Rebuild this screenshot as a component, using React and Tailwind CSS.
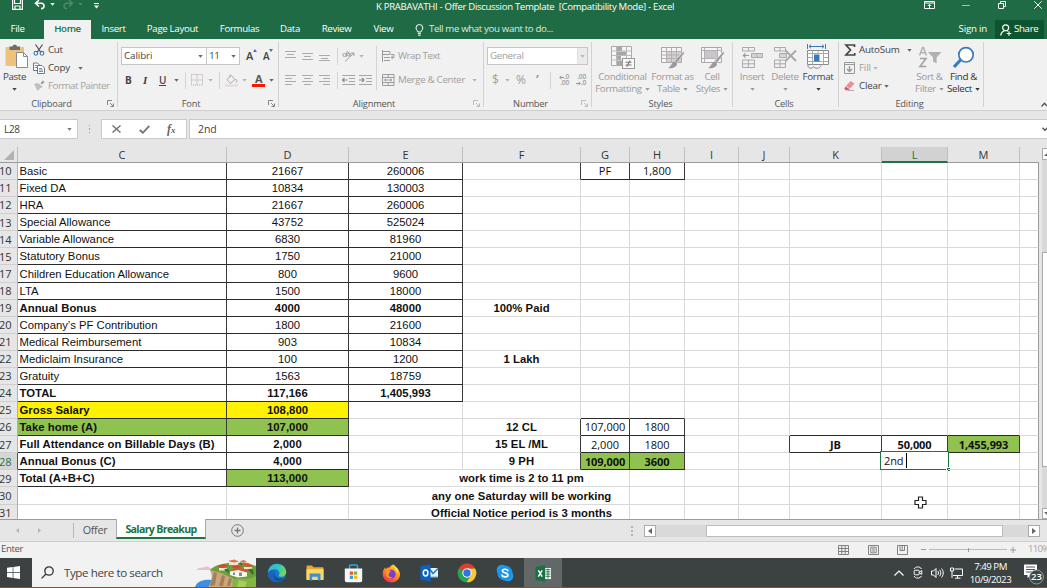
import React from "react";

/* ---------- small shared pieces ---------- */

function Caret({ className = "text-[#666]" }) {
  return (
    <svg width="5" height="3" viewBox="0 0 5 3" className={`shrink-0 ${className}`}>
      <path d="M0.3 0H4.7L2.5 2.7Z" fill="currentColor" />
    </svg>
  );
}

function Sep({ className = "h-[17px]" }) {
  return <div className={`w-px shrink-0 bg-[#d4d4d4] ${className}`} />;
}

function Launcher({ className = "text-[#777]" }) {
  return (
    <svg width="7" height="7" viewBox="0 0 7 7" className={`shrink-0 ${className}`} fill="none" stroke="currentColor">
      <path d="M0.5 5V0.5H5M3 3L6 6M6.5 3.5V6.5H3.5" strokeWidth="0.9" />
    </svg>
  );
}

function Group({ width, label, launcher, labelClass = "", children }) {
  return (
    <div className={`flex h-[71px] shrink-0 ${width}`}>
      <div className="flex min-w-0 flex-1 flex-col">
        <div className="flex h-[58px]">{children}</div>
        <div className="flex h-[13px] items-center pr-[3px]">
          <span className={`flex-1 text-center text-[9.3px] leading-[13px] tracking-[-0.2px] text-[#555] ${labelClass}`}>
            {label}
          </span>
          {launcher && <Launcher className={launcher} />}
        </div>
      </div>
      <div className="mt-[3px] h-[65px] w-px bg-[#d2d2d2]" />
    </div>
  );
}

function Big({ width, icon, lines, color = "text-[#9a9a9a]", caretOnly, caretLast }) {
  return (
    <div className={`flex shrink-0 flex-col items-center pt-[4px] ${width} ${color}`}>
      <div className="flex h-[28px] items-center">{icon}</div>
      <div className="flex h-[12px] items-center leading-[12px] whitespace-nowrap">{lines[0]}</div>
      <div className="flex h-[12px] items-center gap-[3px] leading-[12px] whitespace-nowrap">
        {lines[1]}
        {(caretOnly || caretLast) && <Caret className="text-current" />}
      </div>
    </div>
  );
}

/* ---------- title bar & tabs ---------- */

function TitleBar() {
  return (
    <div className="flex h-[20px] items-start overflow-hidden text-white">
      <div className="flex h-[13px] w-[120px] shrink-0 items-start pl-[12px]">
        <svg width="11" height="10" viewBox="0 0 11 10" fill="none" stroke="#fff" strokeWidth="1.2">
          <path d="M0.6 0V9.4H10.4V0M2.5 0V3.5H8.5V0M3 9V6H8V9" />
        </svg>
        <svg width="12" height="10" viewBox="0 0 12 10" fill="none" stroke="#fff" strokeWidth="1.6" className="ml-[11px]">
          <path d="M5 0L1.5 3.3L5 6.5M2 3.3H7.2C11 3.3 11 8.6 7 8.6" />
        </svg>
        <Caret className="mt-[3px] ml-[4px] text-white" />
        <svg width="12" height="10" viewBox="0 0 12 10" fill="none" stroke="#4e8a69" strokeWidth="1.4" className="ml-[7px]">
          <path d="M7 0L10.5 3.3L7 6.5M10 3.3H4.8C1 3.3 1 8.6 5 8.6" />
        </svg>
        <Caret className="mt-[3px] ml-[4px] text-[#4e8a69]" />
        <svg width="5" height="6" viewBox="0 0 5 6" className="mt-[3px] ml-[11px]" fill="#fff">
          <path d="M0 0H5V1.1H0ZM0 2.6H5L2.5 5.4Z" />
        </svg>
      </div>
      <div className="flex-1 pl-[256px] text-[9.6px] leading-[13px] tracking-[-0.32px] whitespace-pre">
        K PRABAVATHI - Offer Discussion Template  [Compatibility Mode] - Excel
      </div>
      <div className="flex shrink-0 items-start pt-[1px] pr-[5px]">
        <svg width="11" height="9" viewBox="0 0 11 9" fill="none" stroke="#fff" strokeWidth="1">
          <path d="M0.5 0.5H10.5V7.5H0.5ZM0.5 2H10.5M5.5 7V3.5M3.8 5L5.5 3.3L7.2 5" />
        </svg>
        <div className="mt-[4px] ml-[27px] h-px w-[8px] bg-[#9fc3ae]" />
        <svg width="8" height="8" viewBox="0 0 8 8" fill="none" stroke="#fff" strokeWidth="1" className="ml-[28px]">
          <path d="M0.5 2.5H5.5V7.5H0.5ZM2.5 2V0.5H7.5V5.5H6" />
        </svg>
        <svg width="8" height="8" viewBox="0 0 8 8" stroke="#fff" strokeWidth="1" className="ml-[28px]">
          <path d="M0.3 0.3L7.7 7.7M7.7 0.3L0.3 7.7" />
        </svg>
      </div>
    </div>
  );
}

const MENU = [
  ["File", "w-[44px] pr-[9px]"],
  ["Home", "w-[47px] bg-[#f1f1f1] text-[#217346] font-semibold"],
  ["Insert", "w-[45px]"],
  ["Page Layout", "w-[73px]"],
  ["Formulas", "w-[61px]"],
  ["Data", "w-[40px]"],
  ["Review", "w-[53px]"],
  ["View", "w-[41px]"],
];

function MenuTabs() {
  return (
    <div className="flex h-[19px] items-stretch text-[9.7px] tracking-[-0.33px] text-white">
      {MENU.map(([t, c]) => (
        <div key={t} className={`flex shrink-0 items-center justify-center whitespace-nowrap ${c}`}>
          {t}
        </div>
      ))}
      <div className="flex flex-1 items-center pl-[11px] text-[#dcebe2]">
        <svg width="9" height="12" viewBox="0 0 9 12" fill="none" stroke="#fff" strokeWidth="1">
          <path d="M2.8 8C2.8 6.5 1 6 1 3.9A3.4 3.4 0 0 1 7.8 3.9C7.8 6 6 6.5 6 8ZM2.8 9.7H6M3.2 11.3H5.6" />
        </svg>
        <span className="ml-[5px] tracking-[-0.37px] whitespace-nowrap">Tell me what you want to do...</span>
      </div>
      <div className="flex items-center pr-[8px] tracking-[-0.2px] whitespace-nowrap">Sign in</div>
      <div className="mr-[3px] flex w-[49px] items-center bg-[#0e5430] pl-[5px]">
        <svg width="12" height="12" viewBox="0 0 12 12" fill="none" stroke="#fff" strokeWidth="1.2" className="shrink-0">
          <circle cx="5.7" cy="3.8" r="3" />
          <path d="M0.7 11.5C1 8.8 2.6 7.4 4.4 6.8M7 6.6L8 7.2M9 7.2V11.8M6.7 9.5H11.3" />
        </svg>
        <span className="ml-[2px]">Share</span>
      </div>
    </div>
  );
}

/* ---------- ribbon ---------- */

function Lines({ rows }) {
  return (
    <svg width="11" height="10" viewBox="0 0 11 10" className="shrink-0" stroke="#ababab" strokeWidth="1">
      {rows.map(([x1, x2, y]) => (
        <path key={y} d={`M${x1} ${y}H${x2}`} />
      ))}
    </svg>
  );
}

function Indent({ flip }) {
  return (
    <svg width="13" height="11" viewBox="0 0 13 11" className="shrink-0" stroke="#a5a5a5" fill="none">
      <path d="M0 0.5H13M7 3.5H13M7 6.5H13M0 9.5H13" />
      <path d={flip ? "M0 5H5M3 3L5 5L3 7" : "M5.5 5H0.5M2.5 3L0.5 5L2.5 7"} stroke="#888" strokeWidth="1.2" />
    </svg>
  );
}

const TableIcon = ({ brush }) => (
  <svg width="25" height="25" viewBox="0 0 25 25" fill="none">
    <path d="M1.5 2.5H21.5V17.5H1.5Z" fill="#f6f6f6" stroke="#a8a8a8" />
    {brush === "table" ? (
      <>
        <path d="M6 7H21V17H6Z" fill="#d3cfd3" />
        <path d="M1.5 6.5H21.5M1.5 10H21.5M1.5 13.5H21.5M6.5 2.5V17.5M11.5 2.5V17.5M16.5 2.5V17.5" stroke="#b4b0b4" />
      </>
    ) : (
      <>
        <path d="M5 6H17V13H5Z" fill="#c9c5c9" />
        <path d="M1.5 5.5H21.5M1.5 13.5H21.5M4.5 2.5V17.5M17.5 2.5V17.5" stroke="#b4b0b4" />
      </>
    )}
    <path d="M23.5 6.5L24.5 8L17 18L14.5 16Z" fill="#9c999c" stroke="#f1f1f1" strokeWidth="0.6" />
    <path d="M14.5 16.5C16.5 16.8 17.2 18 17 19.5C15.8 22.8 11.5 23.8 8 23C11 22 11.5 17.5 14.5 16.5Z" fill="#9c999c" />
  </svg>
);

const CondIcon = () => (
  <svg width="25" height="25" viewBox="0 0 25 25" fill="none">
    <path d="M1.5 1.5H21.5V20.5H1.5Z" fill="#f6f6f6" stroke="#aaa" />
    <path d="M7 2H12V6H7ZM7 6.5H16V10H7ZM7 11H11V15H7ZM7 15.5H13V20H7Z" fill="#a9a5a9" />
    <path d="M1.5 6H21.5M1.5 10.5H21.5M1.5 15H21.5M6.5 1.5V20.5M16.5 1.5V20.5" stroke="#bbb" />
    <rect x="12.5" y="13.5" width="12" height="10" fill="#f8f8f8" stroke="#999" />
    <path d="M15.5 17.3H21.5M15.5 20H21.5M20.2 15.5L16.8 21.8" stroke="#777" strokeWidth="1.1" />
  </svg>
);

const InsertIcon = () => (
  <svg width="22" height="23" viewBox="0 0 22 23" fill="none" stroke="#aca8ac">
    <path d="M1.5 1.5H13.5V5H1.5ZM7.5 1.5V5M1.5 14H13.5V21.5H1.5ZM7.5 14V21.5M1.5 17.8H13.5" />
    <path d="M10.5 7.5H21.5V11.5H10.5Z" fill="#d6d2d6" />
    <path d="M16 7.5V11.5" />
    <path d="M8 9.5H2.5M4.5 7.3L2.3 9.5L4.5 11.7" stroke="#999" strokeWidth="1.2" />
  </svg>
);

const DeleteIcon = () => (
  <svg width="24" height="23" viewBox="0 0 24 23" fill="none" stroke="#aca8ac">
    <path d="M1.5 1.5H12.5V5H1.5ZM7 1.5V5M1.5 14H12.5V21.5H1.5ZM7 14V21.5M1.5 17.8H12.5" />
    <path d="M6.5 7.5H13.5V11.5H6.5Z" fill="#d6d2d6" />
    <path d="M12.5 4.5L23 15M23 4.5L12.5 15" stroke="#a9a5a9" strokeWidth="1.8" />
  </svg>
);

const FormatIcon = () => (
  <svg width="24" height="26" viewBox="0 0 24 26" fill="none">
    <path d="M1.5 0V5M19.5 0V5M3 2.5H18M5 0.7L3 2.5L5 4.3M16 0.7L18 2.5L16 4.3" stroke="#3b79bd" />
    <path d="M1.5 6.5H22.5V20.5H1.5Z" fill="#fff" stroke="#8a8a8a" />
    <path d="M1.5 9.5H22.5M1.5 17.5H22.5M6.5 6.5V20.5M17.5 6.5V20.5M1.5 13.5H6.5M17.5 13.5H22.5M12 6.5V9.5" stroke="#aaa" />
    <rect x="8" y="10.5" width="5.5" height="7" fill="#3b79bd" />
    <path d="M2 21C1.5 25 6.5 25 7.5 22.5C8.5 25 14 25 15 21.5" stroke="#8a8a8a" />
  </svg>
);

const SortIcon = () => (
  <svg width="24" height="24" viewBox="0 0 24 24" fill="none">
    <path d="M1.5 10.5L4.6 2.5H5.4L8.5 10.5M2.6 7.8H7.4" stroke="#b5b1b5" strokeWidth="1.5" />
    <path d="M2 13.5H8L2 21.5H8.3" stroke="#a5a1a5" strokeWidth="1.6" />
    <path d="M10 7H23.5L18.6 12.5V18.5L15 16.5V12.5Z" fill="#b3afb3" />
  </svg>
);

const FindIcon = () => (
  <svg width="23" height="23" viewBox="0 0 23 23" fill="none">
    <path d="M9 13.5L2 21" stroke="#3b79bd" strokeWidth="3.2" />
    <circle cx="14" cy="8.8" r="7.2" fill="#fff" stroke="#3b79bd" strokeWidth="1.7" />
  </svg>
);

function Ribbon() {
  return (
    <div className="flex h-[72px] shrink-0 border-b border-[#cfcfcf] bg-[#f1f1f1] text-[9.8px] tracking-[-0.36px] text-[#444]">
      <Group width="w-[118px]" label="Clipboard" launcher="text-[#777]" labelClass="pl-[-5px] pr-[4px]">
        <Big
          width="w-[29px]"
          color="text-[#444]"
          caretOnly
          lines={["Paste", ""]}
          icon={
            <svg width="23" height="25" viewBox="0 0 23 25" className="mt-[-2px] ml-[3px]">
              <rect x="0.5" y="3" width="18.5" height="19" rx="1" fill="#efc27c" />
              <path d="M4.5 6V2.5H7.5C7.5 0 12 0 12 2.5H15V6Z" fill="#6d6d6d" />
              <path d="M11.5 8.5H18.5L22.5 12.5V23.5H11.5Z" fill="#fff" stroke="#8a8a8a" />
              <path d="M18.5 8.5V12.5H22.5" fill="none" stroke="#8a8a8a" />
            </svg>
          }
        />
        <div className="flex flex-col pt-[2px] pl-[4px] tracking-[-0.3px]">
          <div className="flex h-[18px] items-center gap-[3px]">
            <svg width="12" height="12" viewBox="0 0 12 12" fill="none" className="shrink-0">
              <path d="M2.5 0.5L8 8.5M9.5 0.5L4 8.5" stroke="#555" strokeWidth="1.3" />
              <circle cx="2.9" cy="9.3" r="1.9" stroke="#3b79bd" strokeWidth="1.1" />
              <circle cx="9" cy="9.3" r="1.9" stroke="#3b79bd" strokeWidth="1.1" />
            </svg>
            Cut
          </div>
          <div className="flex h-[18px] items-center gap-[3px]">
            <svg width="12" height="12" viewBox="0 0 12 12" fill="#fff" stroke="#777" className="shrink-0">
              <path d="M0.5 1H4.5L6.5 3V8.5H0.5Z" />
              <path d="M4.5 3.5H9L11.5 6V11.5H4.5Z" />
              <path d="M6 6.5H9M6 8H10M6 9.5H10M1.8 3.5H4M1.8 5.5H4" stroke="#3b79bd" strokeWidth="0.8" />
            </svg>
            Copy
            <Caret className="ml-[5px] text-[#666]" />
          </div>
          <div className="flex h-[18px] items-center gap-[3px] text-[#a3a3a3]">
            <svg width="12" height="12" viewBox="0 0 12 12" className="shrink-0">
              <path d="M7.5 3L10 0.5L11.5 2L9 4.5Z" fill="#999" />
              <path d="M4 2.5L9.5 7L6 8.5Z" fill="#b0a8b0" />
              <path d="M1 4L4 3L8 7.5L4.5 11Z" fill="#c5bfc5" />
            </svg>
            <span className="tracking-[-0.48px] whitespace-nowrap">Format Painter</span>
          </div>
        </div>
      </Group>

      <Group width="w-[161px]" label="Font" launcher="text-[#777]" labelClass="pr-[4px]">
        <div className="flex flex-col gap-[6px] pt-[8px] pl-[3px]">
          <div className="flex h-[18px] items-center">
            <div className="flex h-[18px] w-[86px] items-center justify-between border border-[#c6c6c6] bg-white pr-[3px] pl-[2px]">
              <span className="tracking-[-0.1px]">Calibri</span>
              <Caret />
            </div>
            <div className="flex h-[18px] w-[33px] items-center justify-between border border-l-0 border-[#c6c6c6] bg-white pr-[3px] pl-[2px]">
              11
              <Caret />
            </div>
            <div className="flex w-[17px] items-start pl-[6px] text-[11px] leading-[12px] font-semibold">
              A
              <svg width="4" height="3" viewBox="0 0 4 3" className="mt-[-1px] shrink-0"><path d="M0 3H4L2 0Z" fill="#3b79bd" /></svg>
            </div>
            <div className="flex items-start pl-[6px] text-[10px] leading-[12px] font-semibold">
              A
              <svg width="4" height="3" viewBox="0 0 4 3" className="mt-[-1px] shrink-0"><path d="M0 0H4L2 3Z" fill="#3b79bd" /></svg>
            </div>
          </div>
          <div className="flex h-[18px] items-center">
            <span className="w-[17px] pl-[4px] text-[10px] font-bold">B</span>
            <span className="w-[17px] pl-[5px] font-['Liberation_Serif',serif] text-[11px] font-bold italic">I</span>
            <span className="w-[17px] pl-[4px] text-[10px] font-semibold underline">U</span>
            <Caret className="ml-[2px] text-[#666]" />
            <Sep className="ml-[6px] h-[17px]" />
            <svg width="12" height="12" viewBox="0 0 12 12" fill="none" stroke="#b9a9ad" className="ml-[5px]" strokeDasharray="1 1">
              <path d="M0.5 0.5H11.5V11H0.5ZM6 0.5V11M0.5 6H11.5" />
            </svg>
            <Caret className="ml-[5px] text-[#b5b5b5]" />
            <Sep className="ml-[6px] h-[17px]" />
            <svg width="14" height="13" viewBox="0 0 14 13" className="ml-[5px]" fill="none" stroke="#aaa">
              <path d="M2 5.5L6.5 1.5L10 5.5L5.5 9.5ZM5 3V0.5M10.5 5C12.5 6.5 12 8 11.5 8.5" />
              <path d="M0 11.5H13" stroke="#e5dde0" strokeWidth="2.5" />
            </svg>
            <Caret className="ml-[3px] text-[#b5b5b5]" />
            <div className="ml-[5px] flex w-[13px] flex-col items-center">
              <span className="text-[11px] leading-[9px] font-bold text-[#555]">A</span>
              <div className="mt-[1px] h-[3px] w-[13px] bg-[#ff1500]" />
            </div>
            <Caret className="ml-[4px] text-[#666]" />
          </div>
        </div>
      </Group>

      <Group width="w-[205px]" label="Alignment" launcher="text-[#b5b5b5]" labelClass="pr-[4px]">
        <div className="flex flex-col gap-[6px] pt-[8px] pl-[6px]">
          <div className="flex h-[18px] items-center">
            <div className="flex gap-[6px]">
              <Lines rows={[[0, 11, 0.5], [2, 9, 3.5], [0, 11, 6.5]]} />
              <Lines rows={[[0, 11, 2.5], [2, 9, 5.5], [0, 11, 8.5]]} />
              <Lines rows={[[0, 11, 4.5], [2, 9, 7.5], [0, 11, 9.5]]} />
            </div>
            <Sep className="ml-[7px] h-[17px]" />
            <svg width="13" height="12" viewBox="0 0 13 12" className="ml-[4px]" fill="none" stroke="#a0a0a0">
              <path d="M3 11.5L12 3M12 3H9M12 3V6" />
              <circle cx="2.5" cy="5" r="1.6" />
              <path d="M4.5 2.5V6.8M5 1L8 5" />
              <circle cx="7" cy="4.5" r="1.6" />
            </svg>
            <Caret className="ml-[4px] text-[#b5b5b5]" />
          </div>
          <div className="flex h-[18px] items-center">
            <div className="flex gap-[6px]">
              <Lines rows={[[0, 11, 0.5], [0, 7, 3.5], [0, 11, 6.5], [0, 7, 9.5]]} />
              <Lines rows={[[0, 11, 0.5], [2, 9, 3.5], [0, 11, 6.5], [2, 9, 9.5]]} />
              <Lines rows={[[0, 11, 0.5], [4, 11, 3.5], [0, 11, 6.5], [4, 11, 9.5]]} />
            </div>
            <Sep className="ml-[7px] h-[17px]" />
            <div className="ml-[4px] flex gap-[4px]">
              <Indent />
              <Indent flip />
            </div>
          </div>
        </div>
        <Sep className="mt-[7px] ml-[4px] h-[44px]" />
        <div className="flex flex-col gap-[6px] pt-[8px] pl-[5px] tracking-[-0.3px] text-[#a0a0a0]">
          <div className="flex h-[18px] items-center gap-[3px]">
            <svg width="13" height="12" viewBox="0 0 13 12" fill="none" stroke="#9c9c9c">
              <path d="M0.5 0V12M0.5 1.5H8V4.5H0.5M2 7.5H8M2 10.5H8M9 4.5H12V7.5H9.5M10.8 6L9 7.5L10.8 9" />
            </svg>
            <span className="tracking-[-0.5px] whitespace-nowrap">Wrap Text</span>
          </div>
          <div className="flex h-[18px] items-center gap-[3px]">
            <svg width="13" height="12" viewBox="0 0 13 12" fill="none" stroke="#9c9c9c">
              <path d="M0.5 0.5H12V11.5H0.5ZM0.5 3.5H12M0.5 8.5H12M6.2 0.5V3.5M6.2 8.5V11.5M2.5 6H10M4 4.8L2.5 6L4 7.2M8.5 4.8L10 6L8.5 7.2" />
            </svg>
            <span className="tracking-[-0.35px] whitespace-nowrap">Merge & Center</span>
            <Caret className="ml-[4px] text-[#b5b5b5]" />
          </div>
        </div>
      </Group>

      <Group width="w-[108px]" label="Number" launcher="text-[#b5b5b5]" labelClass="pr-[4px]">
        <div className="flex flex-col gap-[6px] pt-[8px] pl-[3px] text-[#a0a0a0]">
          <div className="flex h-[18px] w-[101px] items-stretch justify-between border border-[#c6c6c6] bg-white pl-[2px]">
            <span className="leading-[16px]">General</span>
            <div className="flex w-[10px] items-center justify-center border-l border-[#e0e0e0] bg-[#ebebeb]">
              <Caret className="text-[#b5b5b5]" />
            </div>
          </div>
          <div className="flex h-[18px] items-center">
            <span className="w-[18px] pl-[5px] text-[12px]">$</span>
            <Caret className="text-[#b5b5b5]" />
            <span className="w-[19px] pl-[6px] text-[12px]">%</span>
            <span className="w-[16px] pl-[7px] text-[13px] font-bold">’</span>
            <Sep className="ml-[5px] h-[17px]" />
            <div className="ml-[6px] flex w-[12px] shrink-0 flex-col items-end text-[6.6px] leading-[6px] font-semibold tracking-[-0.2px]">
              <div className="flex items-center">
                <svg width="5" height="5" viewBox="0 0 5 5" fill="none" stroke="#999"><path d="M5 2.5H0.8M2.5 0.8L0.8 2.5L2.5 4.2" /></svg>
                .0
              </div>
              <span>.00</span>
            </div>
            <div className="ml-[5px] flex w-[12px] shrink-0 flex-col items-end text-[6.6px] leading-[6px] font-semibold tracking-[-0.2px]">
              <span>.00</span>
              <div className="flex items-center">
                <svg width="5" height="5" viewBox="0 0 5 5" fill="none" stroke="#999"><path d="M0 2.5H4.2M2.5 0.8L4.2 2.5L2.5 4.2" /></svg>
                .0
              </div>
            </div>
          </div>
        </div>
      </Group>

      <Group width="w-[141px]" label="Styles">
        <Big width="w-[61px]" icon={<CondIcon />} lines={["Conditional", "Formatting"]} caretLast />
        <Big width="w-[39px]" icon={<TableIcon brush="table" />} lines={["Format as", "Table"]} caretLast />
        <Big width="w-[40px]" icon={<TableIcon brush="cell" />} lines={["Cell", "Styles"]} caretLast />
      </Group>

      <Group width="w-[106px]" label="Cells">
        <Big width="ml-[2px] w-[34px]" icon={<InsertIcon />} lines={["Insert", ""]} caretOnly />
        <Big width="w-[32px]" icon={<DeleteIcon />} lines={["Delete", ""]} caretOnly />
        <Big width="w-[34px]" icon={<FormatIcon />} lines={["Format", ""]} caretOnly color="text-[#444]" />
      </Group>

      <Group width="w-[145px]" label="Editing">
        <div className="flex w-[72px] shrink-0 flex-col pt-[2px] pl-[5px] tracking-[-0.2px]">
          <div className="flex h-[18px] items-center">
            <svg width="12" height="12" viewBox="0 0 12 12" fill="none" stroke="#444" strokeWidth="1.7" className="shrink-0">
              <path d="M10.5 3V1H2L6.5 6L2 11H10.7V9" />
            </svg>
            <span className="ml-[3px]">AutoSum</span>
            <Caret className="ml-[7px] text-[#666]" />
          </div>
          <div className="flex h-[18px] items-center text-[#a0a0a0]">
            <svg width="11" height="12" viewBox="0 0 11 12" fill="none" stroke="#999">
              <path d="M0.5 0.5H10.5V11.5H0.5ZM0.5 2.5H10.5" />
              <path d="M5.5 4V9.5M3 7L5.5 9.5L8 7" strokeWidth="1.4" />
            </svg>
            <span className="ml-[4px]">Fill</span>
            <Caret className="ml-[2px] text-[#b5b5b5]" />
          </div>
          <div className="flex h-[18px] items-center">
            <svg width="11" height="10" viewBox="0 0 11 10">
              <path d="M6.5 0L10.5 2.5L6 7.5L2 5Z" fill="#f08b96" />
              <path d="M1.6 5.5L5.6 8L4.5 9.3H1.5L0.3 7.5Z" fill="#e2566a" />
              <path d="M4 9.5H10" stroke="#999" strokeWidth="0.8" />
            </svg>
            <span className="ml-[4px]">Clear</span>
            <Caret className="ml-[2px] text-[#666]" />
          </div>
        </div>
        <Big width="w-[37px]" icon={<SortIcon />} lines={["Sort &", "Filter"]} caretLast />
        <Big width="w-[31px]" icon={<FindIcon />} lines={["Find &", "Select"]} caretLast color="text-[#333]" />
      </Group>

      <div className="flex flex-1 items-end justify-end pb-[3px]">
        <svg width="6" height="5" viewBox="0 0 6 5" fill="none" stroke="#555" strokeWidth="1.3">
          <path d="M0.5 4.5L3.5 1.2L6 4" />
        </svg>
      </div>
    </div>
  );
}

/* ---------- formula bar ---------- */

function FormulaBar() {
  return (
    <div className="flex h-[36px] shrink-0 items-start bg-[#e6e6e6] pt-[8px] text-[10px] text-[#444]">
      <div className="flex h-[20px] w-[78px] items-center justify-between border border-l-0 border-[#cacaca] bg-white pr-[5px] pl-[4px]">
        <span className="tracking-[-0.3px]">L28</span>
        <Caret className="text-[#777]" />
      </div>
      <div className="flex h-[20px] w-[23px] flex-col items-center justify-center gap-[2px]">
        <div className="h-[1.5px] w-[1.5px] bg-[#a5a5a5]" />
        <div className="h-[1.5px] w-[1.5px] bg-[#a5a5a5]" />
        <div className="h-[1.5px] w-[1.5px] bg-[#a5a5a5]" />
      </div>
      <div className="flex h-[20px] w-[86px] items-center border border-[#cacaca] bg-white pl-[10px]">
        <svg width="9" height="8" viewBox="0 0 9 8" stroke="#777" strokeWidth="1.5">
          <path d="M0.5 0.5L8.5 7.5M8.5 0.5L0.5 7.5" />
        </svg>
        <svg width="11" height="9" viewBox="0 0 11 9" fill="none" stroke="#777" strokeWidth="1.9" className="ml-[18px]">
          <path d="M0.8 5L3.8 7.8L10.3 0.8" />
        </svg>
        <span className="ml-[17px] font-['Liberation_Serif',serif] text-[12px] font-bold text-[#666] italic">
          f<span className="text-[9px]">x</span>
        </span>
      </div>
      <div className="ml-[2px] flex h-[20px] flex-1 items-center justify-between border border-r-0 border-[#cacaca] bg-white pl-[8px]">
        <span className="pt-[1px] text-[10.5px] tracking-[-0.1px]">2nd</span>
        <svg width="5" height="5" viewBox="0 0 5 5" fill="none" stroke="#555" strokeWidth="1.4">
          <path d="M0.5 0.8L3 3.3L5.5 0.8" />
        </svg>
      </div>
    </div>
  );
}

/* ---------- sheet ---------- */

const COLS = [
  ["C", "w-[209px]"],
  ["D", "w-[122px]"],
  ["E", "w-[114px]"],
  ["F", "w-[118px]"],
  ["G", "w-[49px]"],
  ["H", "w-[55px]"],
  ["I", "w-[54px]"],
  ["J", "w-[51px]"],
  ["K", "w-[92px]"],
  ["L", "w-[66px]"],
  ["M", "w-[72px]"],
  ["N", "w-[19px]"],
];

const GREEN = "bg-[#8fc24f]";
const YELLOW = "bg-[#fff200]";

const ROWS = [
  { n: 10, C: "Basic", D: "21667", E: "260006", G: "PF", H: "1,800" },
  { n: 11, C: "Fixed DA", D: "10834", E: "130003" },
  { n: 12, C: "HRA", D: "21667", E: "260006" },
  { n: 13, C: "Special Allowance", D: "43752", E: "525024" },
  { n: 14, C: "Variable Allowance", D: "6830", E: "81960" },
  { n: 15, C: "Statutory Bonus", D: "1750", E: "21000" },
  { n: 17, C: "Children Education Allowance", D: "800", E: "9600" },
  { n: 18, C: "LTA", D: "1500", E: "18000" },
  { n: 19, C: "Annual Bonus", D: "4000", E: "48000", F: "100% Paid", bold: true },
  { n: 20, C: "Company’s PF Contribution", D: "1800", E: "21600" },
  { n: 21, C: "Medical Reimbursement", D: "903", E: "10834" },
  { n: 22, C: "Mediclaim Insurance", D: "100", E: "1200", F: "1 Lakh" },
  { n: 23, C: "Gratuity", D: "1563", E: "18759" },
  { n: 24, C: "TOTAL", D: "117,166", E: "1,405,993", bold: true },
  { n: 25, C: "Gross Salary", D: "108,800", bold: true, fill: { C: YELLOW, D: YELLOW } },
  { n: 26, C: "Take home (A)", D: "107,000", F: "12 CL", G: "107,000", H: "1800", bold: true, fill: { C: GREEN, D: GREEN } },
  { n: 27, C: "Full Attendance on Billable Days (B)", D: "2,000", F: "15 EL /ML", G: "2,000", H: "1800", K: "JB", L: "50,000", M: "1,455,993", bold: true, fill: { M: GREEN } },
  { n: 28, C: "Annual Bonus (C)", D: "4,000", F: "9 PH", G: "109,000", H: "3600", bold: true, ghBold: true, fill: { G: GREEN, H: GREEN } },
  { n: 29, C: "Total (A+B+C)", D: "113,000", F: "work time is 2 to 11 pm", bold: true, fill: { D: GREEN } },
  { n: 30, F: "any one Saturday will be working" },
  { n: 31, F: "Official Notice period is 3 months" },
];

const hasBottom = (c, n) =>
  (c === "C" || c === "D") ? n <= 29 :
  c === "E" ? n <= 24 :
  (c === "G" || c === "H") ? n === 10 || (n >= 25 && n <= 28) :
  (c === "K" || c === "L" || c === "M") ? n === 26 || n === 27 : false;

const hasRight = (c, n) =>
  (c === "C" || c === "D") ? n <= 29 :
  c === "E" ? n <= 24 :
  (c === "F" || c === "G" || c === "H") ? n === 10 || (n >= 26 && n <= 28) :
  (c === "J" || c === "K" || c === "L" || c === "M") ? n === 27 : false;

function Cell({ col, width, row }) {
  const { n } = row;
  const b = hasBottom(col, n) ? "border-b-[#2b2b2b]" : "border-b-[#d9d9d9]";
  const spill = n >= 29 && (col === "E" || col === "F");
  const r = hasRight(col, n)
    ? "border-r-[#3a3a3a]"
    : spill
      ? "border-r-transparent"
      : col === "N"
        ? "border-r-[#9b9b9b]"
        : "border-r-[#d9d9d9]";
  const fill = row.fill?.[col] ?? "";
  const calibri = "GHKLM".includes(col);
  const bold = col === "F" || (calibri ? "KLM".includes(col) || row.ghBold : row.bold);
  const font = calibri
    ? "font-['Open_Sans',sans-serif] text-[11px]"
    : "font-['Liberation_Sans',Arial,sans-serif] text-[11.3px]";
  return (
    <div
      className={`relative flex shrink-0 items-center border-r border-b pt-[1px] whitespace-nowrap ${width} ${b} ${r} ${fill} ${font} ${
        bold ? (calibri ? "font-bold tracking-[-0.1px]" : "font-bold tracking-[0.04px]") : ""
      } ${col === "C" ? "justify-start pl-[1.5px]" : "justify-center"} text-[#111]`}
    >
      {row[col]}
      {col === "L" && n === 28 && (
        <div className="absolute -top-[2px] -left-[2px] flex h-[19px] w-[69px] items-center border-[1.5px] border-[#217346] bg-white pl-[3px] font-normal">
          <span className="text-[11px] tracking-[-0.1px]">2nd</span>
          <div className="ml-[3px] h-[15px] w-px bg-black" />
          <div className="absolute -right-[2px] -bottom-[2px] h-[4px] w-[4px] border-t border-l border-white bg-[#217346]" />
        </div>
      )}
    </div>
  );
}

function Sheet() {
  return (
    <div className="flex h-[372px] shrink-0 overflow-hidden bg-[#e6e6e6] font-['Open_Sans',sans-serif]">
      <div className="flex w-[1039px] shrink-0 flex-col">
        <div className="flex h-[16px] shrink-0 border-b border-[#9b9b9b] text-[11px] text-[#333]">
          <div className="flex w-[18px] shrink-0 items-end justify-end border-r border-[#bcbcbc] pr-[3px] pb-[2px]">
            <svg width="10" height="10" viewBox="0 0 10 10"><path d="M10 0V10H0Z" fill="#b3b3b3" /></svg>
          </div>
          {COLS.map(([c, w]) => (
            <div
              key={c}
              className={`flex shrink-0 items-center justify-center ${w} ${
                c === "N" ? "" : "border-r border-[#c0c0c0]"
              } ${c === "L" ? "h-[16px] border-b-2 border-b-[#217346] bg-[#d2d2d3] pt-[2px] text-[#217346]" : "h-[15px] pt-[1px]"}`}
            >
              {c === "N" ? "" : c}
            </div>
          ))}
        </div>
        <div className="flex h-[356px] flex-col overflow-hidden">
          {ROWS.map((row) => (
            <div key={row.n} className="flex h-[17.08px] shrink-0 bg-white">
              <div
                className={`flex w-[18px] shrink-0 items-center border-r border-b border-b-[#cfcfcf] text-[11px] ${
                  row.n === 28
                    ? "border-r-[#217346] bg-[#d6d6d6] text-[#217346]"
                    : "border-r-[#b0b0b0] bg-[#e6e6e6] text-[#333]"
                }`}
              >
                <span className="-ml-px pt-[1px]">{row.n}</span>
              </div>
              {COLS.map(([c, w]) => (
                <Cell key={c} col={c} width={w} row={row} />
              ))}
            </div>
          ))}
        </div>
      </div>
      <div className="flex flex-1 flex-col bg-[#e6e6e6] pt-[1px] pl-[3px]">
        <div className="flex h-[12px] items-center justify-end border border-r-0 border-[#ababab] bg-white">
          <svg width="3" height="3" viewBox="0 0 3 3"><path d="M0 3L3 0V3Z" fill="#666" /></svg>
        </div>
        <div className="h-[92px] bg-[#d9d9d9]" />
        <div className="h-[215px] border border-r-0 border-[#ababab] bg-white" />
        <div className="h-[41px] bg-[#d9d9d9]" />
        <div className="flex h-[11px] items-center justify-end border border-r-0 border-[#ababab] bg-white">
          <svg width="3" height="3" viewBox="0 0 3 3"><path d="M0 0H3V3Z" fill="#666" /></svg>
        </div>
      </div>
    </div>
  );
}

/* ---------- sheet tabs and status ---------- */

function SheetTabs() {
  return (
    <div className="flex h-[23px] shrink-0 items-start border-t border-b border-t-[#9b9b9b] border-b-[#cfcfcf] bg-[#e6e6e6] text-[10.8px] text-[#555]">
      <div className="flex h-[21px] w-[73px] items-center pl-[16px]">
        <svg width="3" height="5" viewBox="0 0 3 5"><path d="M3 0V5L0 2.5Z" fill="#b5b5b5" /></svg>
        <svg width="3" height="5" viewBox="0 0 3 5" className="ml-[19px]"><path d="M0 0V5L3 2.5Z" fill="#b5b5b5" /></svg>
      </div>
      <div className="mt-[3px] h-[15px] w-px bg-[#b8b8b8]" />
      <div className="flex h-[20px] w-[42px] items-center justify-center tracking-[-0.3px]">Offer</div>
      <div className="-mt-px flex h-[20px] w-[90px] items-center justify-center border-x border-b-2 border-x-[#ababab] border-b-[#217346] bg-white pt-[3px] text-[10.6px] font-bold tracking-[-0.65px] whitespace-nowrap text-[#217346]">
        Salary Breakup
      </div>
      <svg width="13" height="13" viewBox="0 0 13 13" className="mt-[4px] ml-[25px]" fill="none" stroke="#777">
        <circle cx="6.5" cy="6.5" r="5.8" />
        <path d="M6.5 3.5V9.5M3.5 6.5H9.5" strokeWidth="1.3" />
      </svg>
      <div className="flex h-[21px] flex-1 items-center justify-end">
        <div className="mr-[11px] flex flex-col gap-[2px]">
          <div className="h-[2px] w-[2px] bg-[#b5b5b5]" />
          <div className="h-[2px] w-[2px] bg-[#b5b5b5]" />
          <div className="h-[2px] w-[2px] bg-[#b5b5b5]" />
        </div>
        <div className="flex h-[12px] w-[12px] items-center justify-center border border-[#ababab] bg-white">
          <svg width="4" height="6" viewBox="0 0 4 6"><path d="M4 0V6L0 3Z" fill="#666" /></svg>
        </div>
        <div className="flex h-[12px] w-[372px] bg-[#d9d9d9] pl-[50px]">
          <div className="h-[12px] w-[297px] border border-[#bdbdbd] bg-white" />
        </div>
        <div className="mr-[7px] flex h-[12px] w-[12px] items-center justify-center border border-[#ababab] bg-white">
          <svg width="4" height="6" viewBox="0 0 4 6"><path d="M0 0V6L4 3Z" fill="#666" /></svg>
        </div>
      </div>
    </div>
  );
}

function StatusBar() {
  return (
    <div className="flex h-[16px] shrink-0 items-center bg-[#f1f1f1] pb-[1px] text-[9.6px] text-[#555]">
      <span className="flex-1 pl-[1px] tracking-[-0.4px]">Enter</span>
      <svg width="11" height="10" viewBox="0 0 11 10" fill="none" stroke="#777">
        <path d="M0.5 0.5H10.5V9.5H0.5ZM0.5 3.5H10.5M0.5 6.5H10.5M3.8 0.5V9.5M7.2 0.5V9.5" strokeWidth="0.9" />
      </svg>
      <svg width="11" height="10" viewBox="0 0 11 10" fill="none" stroke="#777" className="ml-[19px]">
        <path d="M0.5 0.5H10.5V9.5H0.5Z M2.8 2.2H8.2V7.8H2.8ZM4 4H7M4 6H7" strokeWidth="0.9" />
      </svg>
      <svg width="11" height="10" viewBox="0 0 11 10" fill="none" stroke="#777" className="ml-[18px]">
        <path d="M0.5 0.5H10.5V9.5H0.5ZM3 0.5V5.5H7.5V0.5M5.2 0.5V5.5" strokeWidth="0.9" />
      </svg>
      <div className="ml-[13px] h-px w-[5px] bg-[#999]" />
      <div className="ml-[3px] flex w-[78px] items-center">
        <div className="h-px w-[39px] bg-[#bbb]" />
        <div className="h-[4px] w-px bg-[#999]" />
        <div className="h-px w-[38px] bg-[#bbb]" />
      </div>
      <svg width="6" height="6" viewBox="0 0 6 6" stroke="#999" className="ml-[3px]"><path d="M3 0V6M0 3H6" /></svg>
      <span className="ml-[12px] w-[19px] tracking-[-0.75px] whitespace-nowrap text-[#a5a5a5]">110%</span>
    </div>
  );
}

/* ---------- taskbar ---------- */

const EdgeLogo = () => (
  <svg width="20" height="20" viewBox="0 0 20 20">
    <defs>
      <linearGradient id="e1" x1="0" y1="0" x2="1" y2="0.4">
        <stop offset="0" stopColor="#2bb3e6" />
        <stop offset="0.6" stopColor="#35c6c0" />
        <stop offset="1" stopColor="#6bd95a" />
      </linearGradient>
    </defs>
    <circle cx="10" cy="10" r="9.2" fill="#1476cf" />
    <path d="M0.9 9.5C1.5 4 5.5 0.8 10 0.8C15.5 0.8 19.2 4.8 19.2 9C19.2 12 17 13.8 14 13.8C12 13.8 11.3 13 12 12C13.4 9.5 11.5 6.3 8 6.3C4.5 6.3 1.5 8 0.9 9.5Z" fill="url(#e1)" />
    <path d="M7.6 9C5 11.5 6.5 17 11.5 18.8C6.5 20 1.6 16.5 1 11C1.8 7 6 6.4 7.6 9Z" fill="#1b62b8" />
    <path d="M8 9.2C6.5 12 9 16.5 17 15C14 20 8.5 19 7 15C6.2 12.6 6.6 10.5 8 9.2Z" fill="#1450a0" />
  </svg>
);

const FolderLogo = () => (
  <svg width="18" height="16" viewBox="0 0 18 16">
    <path d="M0.5 1.5C0.5 1 1 0.5 1.5 0.5H6L7.5 2.2H16.5C17 2.2 17.5 2.6 17.5 3.2V14.5H0.5Z" fill="#e8a92c" />
    <path d="M0.5 4.2H17.5V15H0.5Z" fill="#fbd768" />
    <path d="M3.5 8.5H14.5V15.5H11.8V11.8H6.2V15.5H3.5Z" fill="#3c8fd8" />
  </svg>
);

const StoreLogo = () => (
  <svg width="19" height="19" viewBox="0 0 19 19">
    <path d="M5.5 5V2.5C5.5 1.5 6 1 7 1H12C13 1 13.5 1.5 13.5 2.5V5" fill="none" stroke="#2fa8e0" strokeWidth="1.6" />
    <path d="M0.8 4.5H18.2V16C18.2 17.5 17.5 18.2 16 18.2H3C1.5 18.2 0.8 17.5 0.8 16Z" fill="#f6f6f6" />
    <path d="M5.8 7.5H9V10.7H5.8Z" fill="#ef5533" />
    <path d="M10 7.5H13.2V10.7H10Z" fill="#7ab829" />
    <path d="M5.8 11.7H9V14.9H5.8Z" fill="#2b9fe6" />
    <path d="M10 11.7H13.2V14.9H10Z" fill="#f7b70c" />
  </svg>
);

const FirefoxLogo = () => (
  <svg width="19" height="19" viewBox="0 0 19 19">
    <defs>
      <linearGradient id="f1" x1="0.8" y1="0" x2="0.2" y2="1">
        <stop offset="0" stopColor="#ffd43a" />
        <stop offset="0.5" stopColor="#ff8a1e" />
        <stop offset="1" stopColor="#f0245c" />
      </linearGradient>
    </defs>
    <path d="M12 0.5C13 3 17 4.5 18 9C18.8 14 14.5 18.5 9.5 18.5C4.5 18.5 0.7 14.5 0.7 10C0.7 7 1.8 4.5 3.2 3.2C3.3 4.2 3.6 4.7 4 5C5.2 3.5 6.5 3.3 7.5 3.6C8.5 1.6 10 0.8 12 0.5Z" fill="url(#f1)" />
    <circle cx="9.2" cy="10.2" r="4.4" fill="#7b3fc4" />
    <path d="M3 6C5.5 4.5 8 6 9.2 7.6C8 8 7.4 8.6 7.2 9.5C5.5 11.5 8 13.8 10.5 13C8 16 2.8 13.5 3 6Z" fill="#ff9322" />
    <path d="M11.5 1.5C11.5 4 15 5.5 15 9.5C16.5 8 16.5 5.5 15 4Z" fill="#ffe04d" />
  </svg>
);

const OutlookLogo = () => (
  <svg width="19" height="18" viewBox="0 0 19 18">
    <path d="M10 4H18V13.5H10Z" fill="#e8f2fc" />
    <path d="M10 5.5L13 9.5L18 4.5" fill="none" stroke="#1f7fd6" strokeWidth="1.5" />
    <path d="M10 13.2H18" stroke="#1f7fd6" />
    <path d="M0.5 2.3L10.5 0.5V17.5L0.5 15.7Z" fill="#0b62c0" />
    <ellipse cx="5.6" cy="9" rx="2.3" ry="2.9" fill="none" stroke="#fff" strokeWidth="1.5" />
  </svg>
);

const ChromeLogo = () => (
  <svg width="20" height="20" viewBox="0 0 20 20">
    <path d="M10 10L1.9 5.3A9.3 9.3 0 0 1 18.1 5.4L10 5.5Z" fill="#e33b2e" />
    <path d="M10 10L1.9 5.3A9.3 9.3 0 0 0 9.5 19.3L14 12.2Z" fill="#27a552" />
    <path d="M10 5.4H18.1A9.3 9.3 0 0 1 9.5 19.3L14 12.2Z" fill="#fcc934" />
    <circle cx="10" cy="10" r="4.7" fill="#fff" />
    <circle cx="10" cy="10" r="3.7" fill="#2f74e0" />
  </svg>
);

const SkypeLogo = () => (
  <svg width="18" height="18" viewBox="0 0 18 18">
    <circle cx="6" cy="6" r="5.3" fill="#1ea0ea" />
    <circle cx="12" cy="12" r="5.3" fill="#1ea0ea" />
    <circle cx="9" cy="9" r="7.6" fill="#1b96e6" />
    <path d="M11.8 6.6C11.3 4.8 6.4 4.7 6.4 6.9C6.4 9.2 11.9 8.4 11.9 11C11.9 13.4 6.6 13.3 6.1 11.2" fill="none" stroke="#fff" strokeWidth="1.7" strokeLinecap="round" />
  </svg>
);

const ExcelLogo = () => (
  <svg width="17" height="17" viewBox="0 0 17 17">
    <path d="M9 2.5H16.5V14.5H9Z" fill="#fff" stroke="#207245" strokeWidth="0.8" />
    <path d="M10.5 4.7H15.5M10.5 6.9H15.5M10.5 9.1H15.5M10.5 11.3H15.5M13 3.5V13.5" stroke="#207245" strokeWidth="0.9" />
    <path d="M0.5 2L10.2 0.3V16.7L0.5 15Z" fill="#1b7041" />
    <path d="M3.3 5.3L7.2 11.7M7.2 5.3L3.3 11.7" stroke="#fff" strokeWidth="1.5" />
  </svg>
);

/* Seaside village on a cliff, shown at the end of the search box */
const Village = () => (
  <svg width="61" height="29" viewBox="0 0 61 29">
    <path d="M0 29C2 23 9 21 17 22L26 29Z" fill="#3f8fe0" />
    <path d="M2 11C5 9 8 10 10 9C12 7 14 10 17 11V12H2Z" fill="#e3c2cc" />
    <path d="M15 12C20 7 28 5 36 5H52L61 8V29H30Z" fill="#6a9f3c" />
    <path d="M15 12L26 15L39 21L38 29H13C17 24 18 18 15 12Z" fill="#c9a67c" />
    <path d="M19 14L22 15L20 27L15 28ZM27 17L30 18L28 28H24ZM34 20L37 21L35 28H32Z" fill="#a4805a" />
    <path d="M22 8L29 6L33 8L27 10.5Z" fill="#d7482a" />
    <path d="M24 10H32V12.5H24Z" fill="#f6e6cf" />
    <path d="M33 3L39 1.5L44 3.5L39 5ZM45 3L49 2L52 4L48 5Z" fill="#d7764f" />
    <path d="M34 4.5H43V7H34Z" fill="#f3e3cc" />
    <path d="M36 9L43 7L47 9L41 11Z" fill="#cf4a2c" />
    <path d="M36 12L43 9.5L54 12.5L49 15.5Z" fill="#e0502d" />
    <path d="M35 13.5L43 12L52 14.5V18.5L43 19.5L35 17Z" fill="#fdf6ea" />
    <path d="M38 14.5H40V17H38ZM44 14.5H47V18H44Z" fill="#6b8fb5" />
    <path d="M47 6L53 5L58 8L53 9.5Z" fill="#d9542f" />
    <path d="M49 9H57V11H49Z" fill="#f3e3cc" />
    <path d="M29 12C32 9 35 12 34 15ZM53 12C56 9 60 12 58 17ZM44 5C46 3 48 6 47 8Z" fill="#35722b" />
    <path d="M38 21C45 19 54 23 61 18V29H37Z" fill="#83b545" />
    <path d="M44 22L52 24L50 29H42Z" fill="#a4cf5e" />
  </svg>
);

const APPS = [
  [EdgeLogo, ""],
  [FolderLogo, ""],
  [StoreLogo, ""],
  [FirefoxLogo, ""],
  [OutlookLogo, ""],
  [ChromeLogo, ""],
  [SkypeLogo, ""],
  [ExcelLogo, "bg-[#626867]"],
];

function Taskbar() {
  return (
    <div className="flex h-[30px] shrink-0 items-stretch border-b border-[#c8302b] bg-[#3b4241] text-white">
      <div className="flex w-[32px] items-center pl-[7px]">
        <svg width="13" height="13" viewBox="0 0 13 13" fill="#fff">
          <path d="M0 1.8L5.7 1V6H0ZM6.4 0.9L13 0V6H6.4ZM0 6.8H5.7V11.9L0 11.1ZM6.4 6.8H13V13L6.4 12Z" />
        </svg>
      </div>
      <div className="flex w-[224px] items-center bg-[#f2f2f2] pl-[9px] text-[#444]">
        <svg width="13" height="13" viewBox="0 0 13 13" fill="none" stroke="#333" strokeWidth="1.3">
          <circle cx="8" cy="5" r="4.2" />
          <path d="M5 8L0.6 12.4" />
        </svg>
        <span className="ml-[10px] pt-[1px] text-[11.6px] tracking-[-0.42px] whitespace-nowrap">Type here to search</span>
        <div className="ml-auto h-[29px] w-[61px]">
          <Village />
        </div>
      </div>
      <div className="ml-[2px] flex">
        {APPS.map(([Logo, c], i) => (
          <div key={i} className={`flex w-[38px] items-center justify-center pt-[1px] ${c}`}>
            <Logo />
          </div>
        ))}
      </div>
      <div className="flex flex-1 items-center justify-end pr-[2px]">
        <svg width="10" height="6" viewBox="0 0 10 6" fill="none" stroke="#fff" strokeWidth="1.2"><path d="M0.5 5.5L5 1L9.5 5.5" /></svg>
        <svg width="10" height="13" viewBox="0 0 10 13" fill="none" stroke="#fff" className="ml-[9px]">
          <path d="M1 3C2.5 0.2 7 0.2 8.5 3M1 10C2.5 12.8 7 12.8 8.5 10" />
          <rect x="1.2" y="4.2" width="5" height="4.6" rx="1" />
          <path d="M6.5 6L8.8 4.6V8.4L6.5 7" />
        </svg>
        <svg width="13" height="12" viewBox="0 0 13 12" fill="none" stroke="#fff" className="ml-[8px]">
          <path d="M0.5 4H2.5L5 1.5V10.5L2.5 8H0.5ZM6.8 4C7.7 5.2 7.7 6.8 6.8 8M8.6 2.8C10.2 4.8 10.2 7.2 8.6 9.2M10.5 1.5C12.8 4.2 12.8 7.8 10.5 10.5" />
        </svg>
        <svg width="13" height="12" viewBox="0 0 13 12" fill="none" stroke="#fff" className="ml-[6px]">
          <path d="M4.5 2H12.5V8.5H3M7.5 8.5V11M5 11.2H10.5M0.5 1V4H3.5V1ZM2 4V11" />
        </svg>
        <div className="ml-[7px] flex w-[41px] flex-col items-center pt-[1px] text-[9.7px] leading-[13.5px] tracking-[-0.5px] whitespace-nowrap">
          <span>7:49 PM</span>
          <span>10/9/2023</span>
        </div>
        <div className="relative ml-[12px] h-[24px] w-[22px]">
          <svg width="22" height="24" viewBox="0 0 22 24">
            <path d="M1 3.5H14V14H8L4.5 17V14H1Z" fill="#fff" />
            <path d="M3 6H12M3 8.5H12M3 11H9" stroke="#3b4241" strokeWidth="0.9" />
            <circle cx="13.5" cy="16" r="7" fill="#3f4645" stroke="#a9adac" strokeWidth="0.8" />
          </svg>
          <span className="absolute top-[9.5px] left-[7px] w-[13px] text-center text-[9.5px] leading-[13px] font-semibold">23</span>
        </div>
      </div>
    </div>
  );
}

export default function App() {
  return (
    <div className="relative flex h-[588px] w-[1047px] flex-col overflow-hidden bg-[#e6e6e6] font-['Open_Sans','Noto_Sans',sans-serif]">
      <div className="shrink-0 bg-[#1e6b45]">
        <TitleBar />
        <MenuTabs />
      </div>
      <Ribbon />
      <FormulaBar />
      <Sheet />
      <SheetTabs />
      <StatusBar />
      <Taskbar />
      <svg width="13" height="13" viewBox="0 0 13 13" className="absolute top-[496px] left-[914px]">
        <path d="M4.5 1H8.5V4.5H12V8.5H8.5V12H4.5V8.5H1V4.5H4.5Z" fill="#fff" stroke="#222" strokeWidth="1.2" />
      </svg>
    </div>
  );
}
